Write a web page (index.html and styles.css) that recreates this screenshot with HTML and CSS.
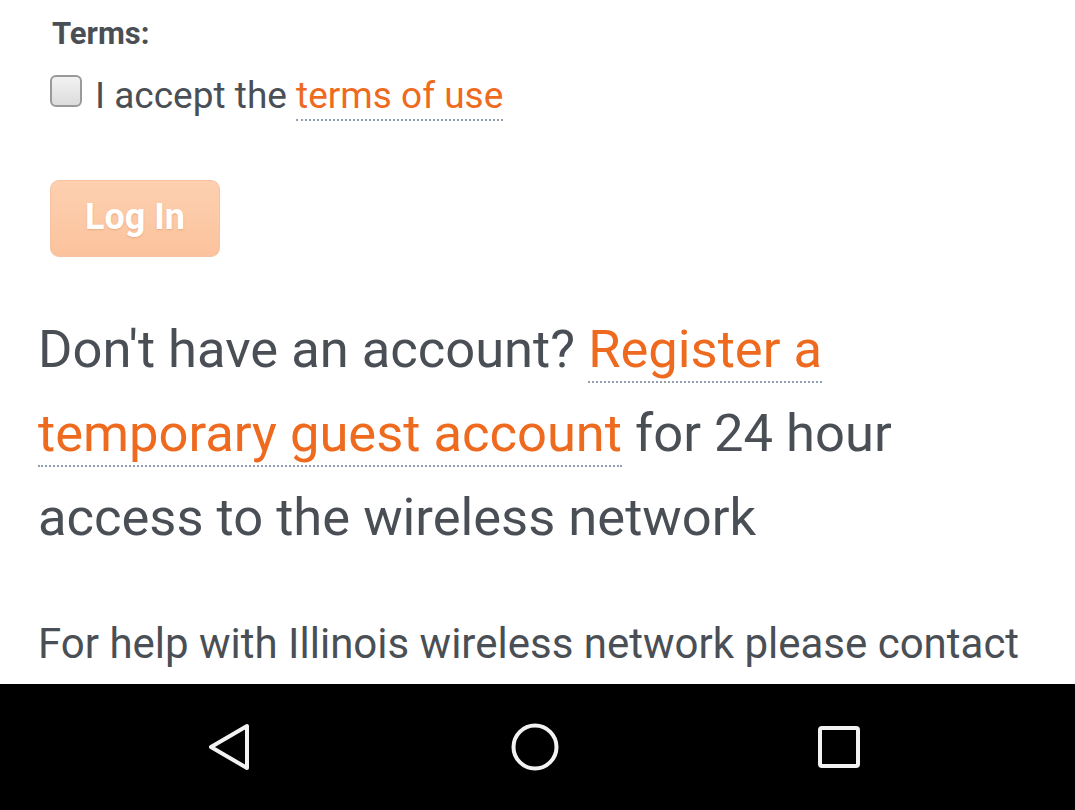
FILE: index.html
```html
<!DOCTYPE html>
<html>
<head>
<meta charset="utf-8">
<link rel="stylesheet" href="styles.css">
</head>
<body>
<div class="screen">
  <main class="content">
    <div class="terms-label">Terms:</div>
    <label class="accept">
      <span class="checkbox"></span>
      <span class="accept-text">I accept the <a class="link">terms of use</a></span>
    </label>
    <button class="login">Log In</button>
    <p class="register">Don't have an account? <a class="link">Register a</a> <a class="link">temporary guest account</a> for 24 hour access to the wireless network</p>
    <p class="help">For help with Illinois wireless network please contact</p>
  </main>
  <nav class="navbar">
    <svg class="nav-icon" width="48" height="48" viewBox="0 0 48 48">
      <path d="M40 3 L40 45 L4 24 Z" fill="none" stroke="#f2f2f2" stroke-width="4" stroke-linejoin="round"/>
    </svg>
    <svg class="nav-icon" width="48" height="48" viewBox="0 0 48 48">
      <circle cx="24" cy="24" r="21.5" fill="none" stroke="#f2f2f2" stroke-width="4"/>
    </svg>
    <svg class="nav-icon" width="48" height="48" viewBox="0 0 48 48">
      <rect x="5" y="5" width="38" height="38" rx="2" fill="none" stroke="#f2f2f2" stroke-width="4"/>
    </svg>
  </nav>
</div>
</body>
</html>
```
FILE: styles.css
```css
html, body {
  margin: 0;
  padding: 0;
  background: #fff;
}
.screen {
  width: 1075px;
  height: 810px;
  display: flex;
  flex-direction: column;
  overflow: hidden;
  font-family: Roboto, "Noto Sans", sans-serif;
  color: #4a4f56;
}
.content {
  height: 684px;
  overflow: hidden;
  padding: 0 0 0 38px;
  box-sizing: border-box;
}
.terms-label {
  font-weight: bold;
  font-size: 31px;
  line-height: 34px;
  margin: 17px 0 0 14px;
}
.accept {
  display: flex;
  align-items: flex-start;
  margin: 25px 0 0 12px;
}
.checkbox {
  width: 28px;
  height: 28px;
  border: 2px solid #9a9a9a;
  border-radius: 6px;
  background: linear-gradient(#f2f2f2, #dcdcdc);
  margin-top: -1px;
  flex: none;
}
.accept-text {
  font-size: 37px;
  line-height: 40px;
  margin-left: 13px;
}
.link {
  color: #ee6a1e;
  text-decoration: none;
  border-bottom: 2px dotted #8fa0b4;
}
.accept-text .link {
  padding-bottom: 2px;
}
.login {
  display: block;
  margin: 64px 0 0 12px;
  width: 170px;
  height: 77px;
  border: 1px solid #f6c3a2;
  border-radius: 9px;
  background: linear-gradient(#fdd0b0, #fbc39d);
  color: #fff;
  font-family: Roboto, sans-serif;
  font-weight: bold;
  font-size: 36px;
  text-shadow: 0 1px 2px rgba(200, 120, 70, 0.35);
  padding: 0 0 4px 0;
}
.register {
  font-size: 52.5px;
  line-height: 84px;
  margin: 50px 20px 0 0;
}
.register .link {
  padding-bottom: 1px;
}
.help {
  font-size: 42px;
  line-height: 60px;
  margin: 55px 0 0 0;
}
.navbar {
  height: 126px;
  background: #000;
  display: flex;
  align-items: center;
  justify-content: center;
  gap: 256px;
  padding-right: 5px;
}
.nav-icon {
  display: block;
}
```
